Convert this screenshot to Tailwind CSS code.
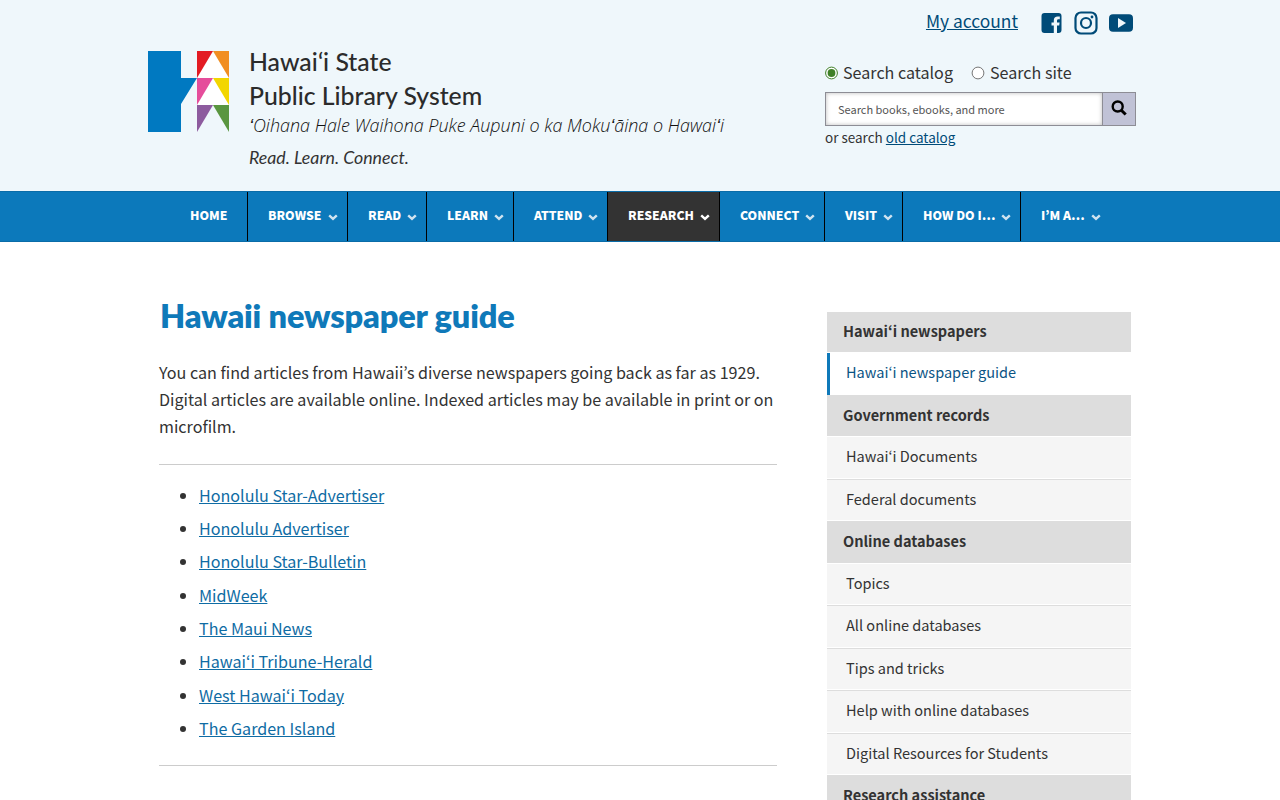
<!DOCTYPE html>
<html lang="en">
<head>
    <meta charset="UTF-8">
    <meta name="viewport" content="width=device-width, initial-scale=1.0">
    <title>Hawaii newspaper guide</title>
    <script src="https://cdn.jsdelivr.net/npm/@tailwindcss/browser@4"></script>
</head>
<body class="h-screen overflow-hidden bg-white font-['Noto_Sans_CJK_JP','Noto_Sans',sans-serif] text-[#333]">

    <!-- Shared menu arrow -->
    <svg class="hidden">
        <symbol id="chevron" viewBox="0 0 10 7"><path d="M1.200 1.300L5 4.900 8.800 1.300" fill="none" stroke="currentColor" stroke-width="2.400"/></symbol>
    </svg>

    <!-- Header -->
    <header class="h-[191px] bg-[#eff7fb]">
        <div class="flex justify-between pl-[148px] pr-[144px]">
            <div class="flex pt-[51px]">
                <svg class="h-[81px] w-[81px] shrink-0" viewBox="0 0 81 81">
                    <path fill="#0079c1" d="M0 0h33v27h16L33 53v28H0z"/>
                    <path fill="#fff" d="M49 27L65 0l16 27v27L65 27 49 54zM49 54l16-27 16 27z"/>
                    <path fill="#e31b23" d="M49 0h16L49 27z"/>
                    <path fill="#f18e22" d="M65 0h16v27z"/>
                    <path fill="#e54d9b" d="M49 27h16L49 54z"/>
                    <path fill="#f2d600" d="M65 27h16v27z"/>
                    <path fill="#8d5b9e" d="M49 54h16L49 81z"/>
                    <path fill="#5a9640" d="M65 54h16v27z"/>
                </svg>
                <div class="-mt-[6px] ml-[20px] whitespace-nowrap">
                    <div class="font-[Lato,sans-serif] text-[24.8px]/[34px] font-medium text-[#2b2b2b]">Hawaiʻi State<br>Public Library System</div>
                    <div class="-mt-px font-['Open_Sans',sans-serif] text-[17.96px]/[26px] font-light text-[#111] italic">ʻOihana Hale Waihona Puke Aupuni o ka Mokuʻāina o Hawaiʻi</div>
                    <div class="mt-[6px] font-[Lato,sans-serif] text-[17.75px]/[26px] italic">Read. Learn. Connect.</div>
                </div>
            </div>

            <div class="w-[311px] pt-[8px]">
                <div class="flex h-[28px] items-center justify-end pr-[3px]">
                    <a href="#" class="-mt-[2px] mr-[23px] text-[17.4px]/[28px] text-[#004b78] underline">My account</a>
                    <svg class="mt-px mr-3 h-[22px] w-[21px]" viewBox="0 0 21 22">
                        <path fill="#004b78" fill-rule="evenodd" d="M3.500 1h14A3 3 0 0 1 20.500 4v14a3 3 0 0 1-3 3h-1.500v-7.500h2.200l.4-3H16V8.800c0-.9.400-1.500 1.500-1.500h1.300V4.600c-.5-.1-1.200-.1-2-.1-2.600 0-4 1.500-4 4v2h-2.300v3h2.300V21H3.500A3 3 0 0 1 .5 18V4A3 3 0 0 1 3.500 1z"/>
                    </svg>
                    <svg class="mt-px mr-[11px] h-6 w-6" viewBox="0 0 24 24" fill="none" stroke="#004b78" stroke-width="2.200">
                        <rect x="1.500" y="1.500" width="21" height="21" rx="5.500"/>
                        <circle cx="12" cy="12" r="5"/>
                        <circle cx="18" cy="6" r="1.400" fill="#004b78" stroke="none"/>
                    </svg>
                    <svg class="mt-px h-[18px] w-6" viewBox="0 0 24 18">
                        <rect width="24" height="17.500" y=".3" rx="4" fill="#004b78"/>
                        <path fill="#eff7fb" d="M9 4l8 5-8 5z"/>
                    </svg>
                </div>

                <div class="mt-[23px] flex h-[27px] items-center text-[16.1px]/[27px]">
                    <svg class="mr-[4px] h-[14px] w-[14px]" viewBox="0 0 14 14">
                        <circle cx="6.500" cy="7" r="5.900" fill="#fff" stroke="#3f8027"/>
                        <circle cx="6.500" cy="7" r="3.900" fill="#3f8027"/>
                    </svg>
                    <span class="mr-[18px]">Search catalog</span>
                    <svg class="mr-[5px] h-[14px] w-[14px]" viewBox="0 0 14 14">
                        <circle cx="7" cy="7" r="5.900" fill="#fff" stroke="#767676"/>
                    </svg>
                    <span>Search site</span>
                </div>

                <div class="mt-[6px] flex h-[34px] border border-[#8d8d95] bg-white">
                    <div class="flex-1 pl-[12px] text-[11px]/[32px] text-[#555] shadow-[inset_0_0_4px_#bbb]">Search books, ebooks, and more</div>
                    <div class="flex w-[33px] items-center justify-center border-l border-[#8d8d95] bg-[#c0c2d6]">
                        <svg class="mb-[2px] h-4 w-4" viewBox="0 0 16 16" fill="none" stroke="#000">
                            <circle cx="6.700" cy="6.500" r="5" stroke-width="2.400"/>
                            <path d="M10.300 10.200l4.400 4.300" stroke-width="3"/>
                        </svg>
                    </div>
                </div>
                <div class="mt-px text-[13.5px]/[21px]">or search <a href="#" class="text-[#004b78] underline">old catalog</a></div>
            </div>
        </div>
    </header>

    <!-- Main menu -->
    <nav class="flex h-[51px] border-y border-[#0a6ca8] bg-[#0c79bb] pl-[170px] text-[12.2px]/[46px] font-black whitespace-nowrap text-white">
        <a href="#" class="w-[77px] pl-5">HOME</a>
        <a href="#" class="flex w-[100px] border-l border-black pl-5">BROWSE<svg class="mt-[22px] ml-[6px] h-[7px] w-[10px] text-[#cfe3f0]"><use href="#chevron"/></svg></a>
        <a href="#" class="flex w-[79px] border-l border-black pl-5">READ<svg class="mt-[22px] ml-[6px] h-[7px] w-[10px] text-[#cfe3f0]"><use href="#chevron"/></svg></a>
        <a href="#" class="flex w-[87px] border-l border-black pl-5">LEARN<svg class="mt-[22px] ml-[6px] h-[7px] w-[10px] text-[#cfe3f0]"><use href="#chevron"/></svg></a>
        <a href="#" class="flex w-[94px] border-l border-black pl-5">ATTEND<svg class="mt-[22px] ml-[6px] h-[7px] w-[10px] text-[#cfe3f0]"><use href="#chevron"/></svg></a>
        <a href="#" class="flex w-[112px] border-l border-black bg-[#333] pl-5">RESEARCH<svg class="mt-[22px] ml-[6px] h-[7px] w-[10px]"><use href="#chevron"/></svg></a>
        <a href="#" class="flex w-[105px] border-l border-black pl-5">CONNECT<svg class="mt-[22px] ml-[6px] h-[7px] w-[10px] text-[#cfe3f0]"><use href="#chevron"/></svg></a>
        <a href="#" class="flex w-[78px] border-l border-black pl-5">VISIT<svg class="mt-[22px] ml-[6px] h-[7px] w-[10px] text-[#cfe3f0]"><use href="#chevron"/></svg></a>
        <a href="#" class="flex w-[118px] border-l border-black pl-5">HOW DO I…<svg class="mt-[22px] ml-[6px] h-[7px] w-[10px] text-[#cfe3f0]"><use href="#chevron"/></svg></a>
        <a href="#" class="flex border-l border-black pl-5">I’M A…<svg class="mt-[22px] ml-[6px] h-[7px] w-[10px] text-[#cfe3f0]"><use href="#chevron"/></svg></a>
    </nav>

    <div class="flex pl-[159px]">
        <!-- Content -->
        <main class="w-[618px] pt-[53px]">
            <h1 class="pl-px font-[Lato,sans-serif] text-[32.5px]/[42px] font-extrabold tracking-[-0.15px] text-[#0f79b9]">Hawaii newspaper guide</h1>
            <p class="mt-[22px] text-[16.12px]/[27px] whitespace-nowrap">You can find articles from Hawaii’s diverse newspapers going back as far as 1929.<br>Digital articles are available online. Indexed articles may be available in print or on<br>microfilm.</p>
            <hr class="mt-[24px] border-[#ccc]">
            <ul class="mt-[16.600px] list-disc pl-10 text-[16.12px]/[27px] text-[#333]">
                <li class="mb-[6.330px]"><a href="#" class="text-[#0f6ca4] underline">Honolulu Star-Advertiser</a></li>
                <li class="mb-[6.330px]"><a href="#" class="text-[#0f6ca4] underline">Honolulu Advertiser</a></li>
                <li class="mb-[6.330px]"><a href="#" class="text-[#0f6ca4] underline">Honolulu Star-Bulletin</a></li>
                <li class="mb-[6.330px]"><a href="#" class="text-[#0f6ca4] underline">MidWeek</a></li>
                <li class="mb-[6.330px]"><a href="#" class="text-[#0f6ca4] underline">The Maui News</a></li>
                <li class="mb-[6.330px]"><a href="#" class="text-[#0f6ca4] underline">Hawaiʻi Tribune-Herald</a></li>
                <li class="mb-[6.330px]"><a href="#" class="text-[#0f6ca4] underline">West Hawaiʻi Today</a></li>
                <li><a href="#" class="text-[#0f6ca4] underline">The Garden Island</a></li>
            </ul>
            <hr class="mt-[23px] border-[#ccc]">
        </main>

        <!-- Section menu -->
        <aside class="mt-[70px] ml-[50px] w-[304px] text-[14.54px]/[38px]">
            <div class="h-[40px] bg-[#ddd] pl-4 font-bold">Hawaiʻi newspapers</div>
            <a href="#" class="mt-px block h-[42px] border-l-3 border-[#0f79b9] pl-4 text-[#0b5484]">Hawaiʻi newspaper guide</a>
            <div class="h-[41px] bg-[#ddd] pt-px pl-4 font-bold">Government records</div>
            <a href="#" class="block h-[43px] border-y border-white bg-[#f5f5f5] pl-[19px]">Hawaiʻi Documents</a>
            <a href="#" class="block h-[42px] border-y border-t-[#ddd] border-b-white bg-[#f5f5f5] pl-[19px]">Federal documents</a>
            <div class="h-[42px] bg-[#ddd] pt-px pl-4 font-bold">Online databases</div>
            <a href="#" class="block h-[42px] border-y border-white bg-[#f5f5f5] pl-[19px]">Topics</a>
            <a href="#" class="block h-[43px] border-y border-t-[#ddd] border-b-white bg-[#f5f5f5] pl-[19px]">All online databases</a>
            <a href="#" class="block h-[42px] border-y border-t-[#ddd] border-b-white bg-[#f5f5f5] pl-[19px]">Tips and tricks</a>
            <a href="#" class="block h-[43px] border-y border-t-[#ddd] border-b-white bg-[#f5f5f5] pl-[19px]">Help with online databases</a>
            <a href="#" class="block h-[42px] border-y border-t-[#ddd] border-b-white bg-[#f5f5f5] pl-[19px]">Digital Resources for Students</a>
            <div class="h-[42px] bg-[#ddd] pt-px pl-4 font-bold">Research assistance</div>
        </aside>
    </div>

</body>
</html>
